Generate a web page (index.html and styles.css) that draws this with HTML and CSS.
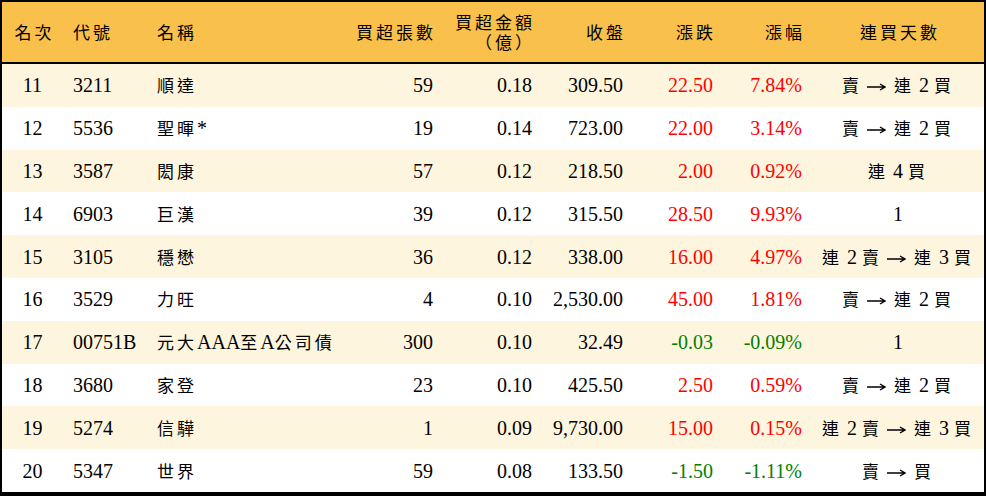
FILE: index.html
```html
<!DOCTYPE html>
<html lang="zh-Hant">
<head>
<meta charset="utf-8">
<title>買超排行</title>
<link rel="stylesheet" href="styles.css">
</head>
<body>
<div class="frame">
<table class="rank">
<colgroup>
<col class="w1"><col class="w2"><col class="w3"><col class="w4"><col class="w5"><col class="w6"><col class="w7"><col class="w8"><col class="w9">
</colgroup>
<thead>
<tr>
<th class="c"><span class="zh">名次</span></th>
<th class="l"><span class="zh">代號</span></th>
<th class="l"><span class="zh">名稱</span></th>
<th class="r"><span class="zh">買超張數</span></th>
<th class="r"><span class="zh line">買超金額</span><span class="zh line">（億）</span></th>
<th class="r"><span class="zh">收盤</span></th>
<th class="r"><span class="zh">漲跌</span></th>
<th class="r"><span class="zh">漲幅</span></th>
<th class="c"><span class="zh">連買天數</span></th>
</tr>
</thead>
<tbody>
<tr class="odd"><td class="c">11</td><td class="l">3211</td><td class="l"><span class="zh">順達</span></td><td class="r">59</td><td class="r">0.18</td><td class="r">309.50</td><td class="r up">22.50</td><td class="r up">7.84%</td><td class="c"><span class="zh">賣</span> <svg class="arr" viewBox="0 0 19 8" aria-label="→"><path d="M0 4H17.5M13 1L18 4L13 7"/></svg> <span class="zh">連</span> 2 <span class="zh">買</span></td></tr>
<tr><td class="c">12</td><td class="l">5536</td><td class="l"><span class="zh">聖暉</span>*</td><td class="r">19</td><td class="r">0.14</td><td class="r">723.00</td><td class="r up">22.00</td><td class="r up">3.14%</td><td class="c"><span class="zh">賣</span> <svg class="arr" viewBox="0 0 19 8" aria-label="→"><path d="M0 4H17.5M13 1L18 4L13 7"/></svg> <span class="zh">連</span> 2 <span class="zh">買</span></td></tr>
<tr class="odd"><td class="c">13</td><td class="l">3587</td><td class="l"><span class="zh">閎康</span></td><td class="r">57</td><td class="r">0.12</td><td class="r">218.50</td><td class="r up">2.00</td><td class="r up">0.92%</td><td class="c"><span class="zh">連</span> 4 <span class="zh">買</span></td></tr>
<tr><td class="c">14</td><td class="l">6903</td><td class="l"><span class="zh">巨漢</span></td><td class="r">39</td><td class="r">0.12</td><td class="r">315.50</td><td class="r up">28.50</td><td class="r up">9.93%</td><td class="c">1</td></tr>
<tr class="odd"><td class="c">15</td><td class="l">3105</td><td class="l"><span class="zh">穩懋</span></td><td class="r">36</td><td class="r">0.12</td><td class="r">338.00</td><td class="r up">16.00</td><td class="r up">4.97%</td><td class="c"><span class="zh">連</span> 2 <span class="zh">賣</span> <svg class="arr" viewBox="0 0 19 8" aria-label="→"><path d="M0 4H17.5M13 1L18 4L13 7"/></svg> <span class="zh">連</span> 3 <span class="zh">買</span></td></tr>
<tr><td class="c">16</td><td class="l">3529</td><td class="l"><span class="zh">力旺</span></td><td class="r">4</td><td class="r">0.10</td><td class="r">2,530.00</td><td class="r up">45.00</td><td class="r up">1.81%</td><td class="c"><span class="zh">賣</span> <svg class="arr" viewBox="0 0 19 8" aria-label="→"><path d="M0 4H17.5M13 1L18 4L13 7"/></svg> <span class="zh">連</span> 2 <span class="zh">買</span></td></tr>
<tr class="odd"><td class="c">17</td><td class="l">00751B</td><td class="l"><span class="zh">元大</span>AAA<span class="zh">至</span>A<span class="zh">公司債</span></td><td class="r">300</td><td class="r">0.10</td><td class="r">32.49</td><td class="r down">-0.03</td><td class="r down">-0.09%</td><td class="c">1</td></tr>
<tr><td class="c">18</td><td class="l">3680</td><td class="l"><span class="zh">家登</span></td><td class="r">23</td><td class="r">0.10</td><td class="r">425.50</td><td class="r up">2.50</td><td class="r up">0.59%</td><td class="c"><span class="zh">賣</span> <svg class="arr" viewBox="0 0 19 8" aria-label="→"><path d="M0 4H17.5M13 1L18 4L13 7"/></svg> <span class="zh">連</span> 2 <span class="zh">買</span></td></tr>
<tr class="odd"><td class="c">19</td><td class="l">5274</td><td class="l"><span class="zh">信驊</span></td><td class="r">1</td><td class="r">0.09</td><td class="r">9,730.00</td><td class="r up">15.00</td><td class="r up">0.15%</td><td class="c"><span class="zh">連</span> 2 <span class="zh">賣</span> <svg class="arr" viewBox="0 0 19 8" aria-label="→"><path d="M0 4H17.5M13 1L18 4L13 7"/></svg> <span class="zh">連</span> 3 <span class="zh">買</span></td></tr>
<tr><td class="c">20</td><td class="l">5347</td><td class="l"><span class="zh">世界</span></td><td class="r">59</td><td class="r">0.08</td><td class="r">133.50</td><td class="r down">-1.50</td><td class="r down">-1.11%</td><td class="c"><span class="zh">賣</span> <svg class="arr" viewBox="0 0 19 8" aria-label="→"><path d="M0 4H17.5M13 1L18 4L13 7"/></svg> <span class="zh">買</span></td></tr>
</tbody>
</table>
</div>
</body>
</html>
```
FILE: styles.css
```css
html, body {
  margin: 0;
  padding: 0;
  background: #ffffff;
}
.frame {
  width: 986px;
  height: 496px;
  box-sizing: border-box;
  border: 2px solid #000;
  border-bottom-width: 4px;
  overflow: hidden;
  background: #ffffff;
}
.rank {
  width: 982px;
  table-layout: fixed;
  border-collapse: collapse;
  border-spacing: 0;
  font-family: "Liberation Serif", "Noto Sans CJK TC", serif;
  font-size: 20px;
  color: #000;
}
.w1 { width: 61px; }
.w2 { width: 84px; }
.w3 { width: 196px; }
.w4 { width: 100px; }
.w5 { width: 99px; }
.w6 { width: 91px; }
.w7 { width: 90px; }
.w8 { width: 89px; }
.w9 { width: 172px; }
.rank th,
.rank td {
  padding: 0 10px;
  white-space: nowrap;
  vertical-align: middle;
}
.rank thead tr {
  background: #f9c04c;
  border-bottom: 2px solid #000;
}
.rank th {
  height: 60px;
  font-weight: normal;
  line-height: 20px;
}
.rank th.r {
  padding-right: 7px;
}
.rank th.c {
  padding-left: 12px;
  padding-right: 8px;
}
.rank td {
  height: 42.8px;
  line-height: 22px;
}
.rank tbody tr.odd {
  background: #fef5de;
}
.zh {
  font-family: "Noto Sans CJK TC", "Liberation Serif", sans-serif;
  font-size: 17px;
  letter-spacing: 3px;
}
.line {
  display: block;
  line-height: 20px;
}
.arr {
  display: inline-block;
  width: 19px;
  height: 8px;
  margin-right: 3px;
  vertical-align: 1px;
  fill: none;
  stroke: currentColor;
  stroke-width: 1.3;
}
.c { text-align: center; }
.l { text-align: left; }
.r { text-align: right; }
.up { color: #ff0000; }
.down { color: #008000; }
```
